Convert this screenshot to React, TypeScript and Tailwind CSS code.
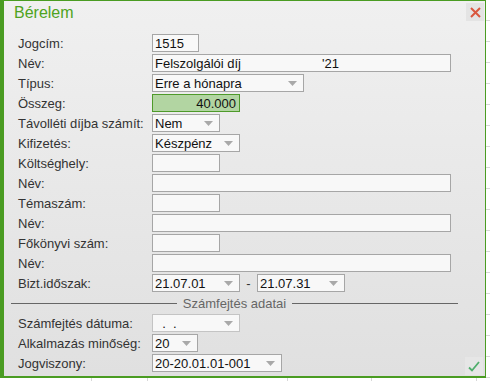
import React from "react";

const font = { fontFamily: '"Liberation Sans", Arial, sans-serif' };

function Arrow() {
  return (
    <svg width="9" height="5" viewBox="0 0 9 5" className="shrink-0">
      <path d="M0 0 L9 0 L4.5 5 Z" fill="#a9a9a9" />
    </svg>
  );
}

function Box({ w, children, right }: { w: string; children?: React.ReactNode; right?: boolean }) {
  return (
    <div
      className={`${w} h-[18px] border border-[#a6a6a6] bg-[#f8f8f8] px-[2px] flex items-center text-[13px] text-[#111] leading-none whitespace-pre ${
        right ? "justify-end" : ""
      }`}
    >
      {children}
    </div>
  );
}

function Select({ w, value, light }: { w: string; value: string; light?: boolean }) {
  return (
    <div
      className={`${w} h-[18px] border ${
        light ? "border-[#c4c4c4]" : "border-[#a6a6a6]"
      } bg-[#f8f8f8] pl-[2px] pr-[6px] flex items-center justify-between text-[13px] text-[#111] leading-none whitespace-pre`}
    >
      <span>{value}</span>
      <Arrow />
    </div>
  );
}

function Row({ label, children }: { label: string; children: React.ReactNode }) {
  return (
    <div className="h-[20px] flex items-center">
      <div className="w-[134px] text-[13px] text-[#333] leading-none">{label}</div>
      {children}
    </div>
  );
}

const gridCols = [92, 56, 140, 84, 105];

export default function App() {
  return (
    <div className="w-[490px] h-[381px] bg-white flex flex-col overflow-hidden" style={font}>
      <div className="flex h-[378px]">
        {/* dialog */}
        <div className="relative w-[486px] h-[378px] border-t border-r border-b-2 border-l-4 border-[#4a9c22] bg-gradient-to-b from-[#f0f0f0] to-[#e0e0e0]">
          <div className="h-[32px] flex justify-between items-start">
            <div className="pl-[10px] pt-[2px] text-[16px] leading-[20px] text-[#4ea321]">Bérelem</div>
            <button className="mt-[2px] mr-[1px] w-[18px] h-[18px] bg-[#e4e4e4] flex items-center justify-center">
              <svg width="11" height="11" viewBox="0 0 11 11">
                <path d="M1 1 L10 10 M10 1 L1 10" stroke="#d9573f" strokeWidth="2" />
              </svg>
            </button>
          </div>

          <div className="pl-[14px] flex flex-col">
            <Row label="Jogcím:">
              <Box w="w-[47px]">1515</Box>
            </Row>
            <Row label="Név:">
              <Box w="w-[299px]">
                <span>Felszolgálói díj</span>
                <span className="ml-[81px]">'21</span>
              </Box>
            </Row>
            <Row label="Típus:">
              <Select w="w-[152px]" value="Erre a hónapra" />
            </Row>
            <Row label="Összeg:">
              <div className="w-[88px] h-[18px] border border-[#4e9a2a] bg-[#b2d5a2] px-[3px] flex items-center justify-end text-[13px] text-[#111] leading-none">
                40.000
              </div>
            </Row>
            <Row label="Távolléti díjba számít:">
              <Select w="w-[68px]" value="Nem" />
            </Row>
            <Row label="Kifizetés:">
              <Select w="w-[88px]" value="Készpénz" />
            </Row>
            <Row label="Költséghely:">
              <Box w="w-[68px]" />
            </Row>
            <Row label="Név:">
              <Box w="w-[299px]" />
            </Row>
            <Row label="Témaszám:">
              <Box w="w-[68px]" />
            </Row>
            <Row label="Név:">
              <Box w="w-[299px]" />
            </Row>
            <Row label="Főkönyvi szám:">
              <Box w="w-[68px]" />
            </Row>
            <Row label="Név:">
              <Box w="w-[299px]" />
            </Row>
            <Row label="Bizt.időszak:">
              <Select w="w-[88px]" value="21.07.01" />
              <span className="w-[17px] text-center text-[13px] text-[#333] leading-none">-</span>
              <Select w="w-[88px]" value="21.07.31" />
            </Row>

            <div className="h-[20px] flex items-center ml-[-7px] w-[447px] gap-[6px]">
              <div className="flex-1 h-px bg-[#666]" />
              <span className="text-[13px] text-[#666] leading-none">Számfejtés adatai</span>
              <div className="flex-1 h-px bg-[#666]" />
            </div>

            <Row label="Számfejtés dátuma:">
              <Select w="w-[88px]" value="  .  ." light />
            </Row>
            <Row label="Alkalmazás minőség:">
              <Select w="w-[46px]" value="20" />
            </Row>
            <Row label="Jogviszony:">
              <Select w="w-[130px]" value="20-20.01.01-001" />
            </Row>
          </div>

          <button className="absolute right-[2px] bottom-[1px] w-[18px] h-[18px] bg-[#e6e6e6] flex items-center justify-center">
            <svg width="12" height="11" viewBox="0 0 12 11">
              <path d="M1 6.5 L4 9.5 L11 1" stroke="#4fae6c" strokeWidth="1.8" fill="none" />
            </svg>
          </button>
        </div>

        {/* spreadsheet behind, right strip */}
        <div className="flex-1 flex flex-col">
          {Array.from({ length: 18 }).map((_, i) => (
            <div key={i} className="h-[21.3px] border-b border-[#d8d8d8]" />
          ))}
        </div>
      </div>

      {/* spreadsheet behind, bottom strip */}
      <div className="flex-1 flex">
        {gridCols.map((w, i) => (
          <div key={i} className="border-r border-[#d8d8d8]" style={{ width: w }} />
        ))}
      </div>
    </div>
  );
}
